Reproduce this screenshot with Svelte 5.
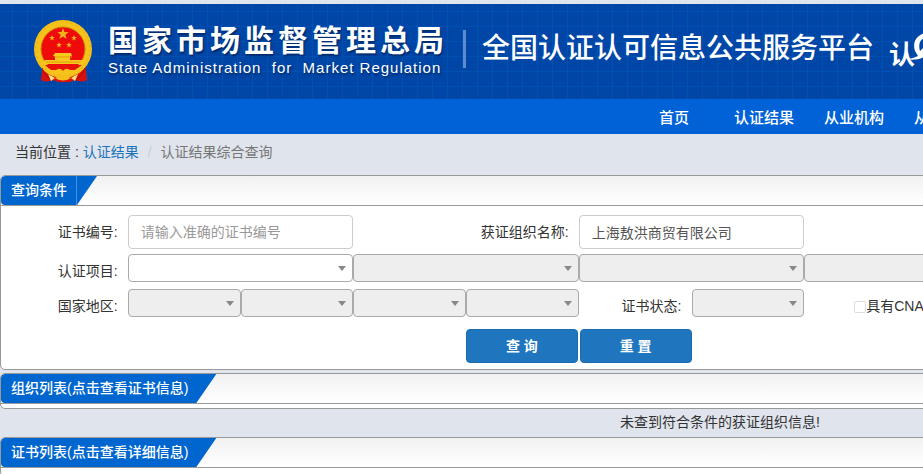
<script lang="ts">
  const nav: string[] = ["首页", "认证结果", "从业机构", "从业人员"];
  const stars = [
    { x: 29, y: 14, r: 6 },
    { x: 18, y: 18, r: 3 },
    { x: 40, y: 18, r: 3 },
    { x: 25, y: 25, r: 3 },
    { x: 35, y: 25, r: 3 },
  ];

  let certNo = "";
  let orgName = "上海敖洪商贸有限公司";
  let hasCnas = false;

  function star(x: number, y: number, r: number) {
    const pts = [];
    for (let i = 0; i < 10; i++) {
      const len = i % 2 ? r * 0.4 : r;
      const a = (Math.PI / 5) * i - Math.PI / 2;
      pts.push(`${x + len * Math.cos(a)},${y + len * Math.sin(a)}`);
    }
    return pts.join(" ");
  }

  function reset() {
    certNo = "";
    orgName = "";
    hasCnas = false;
  }
</script>

<div class="page">
  <header>
    <svg class="emblem" width="60" height="64" viewBox="0 0 60 64" aria-hidden="true">
      <path d="M9 43L7 60q4 3 12 0 5 3 11 2 6 1 11-2 8 3 12 0l-2-17z" fill="#d8110f" />
      <ellipse cx="29" cy="29" rx="29" ry="29" fill="#f5c21a" />
      <ellipse cx="29" cy="29" rx="27" ry="27" fill="none" stroke="#e9ae17" stroke-width="1" stroke-dasharray="2 3" />
      <ellipse cx="29" cy="29" rx="22" ry="22" fill="#f00b0b" stroke="#c8820f" />
      {#each stars as s}
        <polygon points={star(s.x, s.y, s.r)} fill="#f3b51c" />
      {/each}
      <path d="M21 33h16l1 3h-2v4h12l2 4H9l2-4h10v-4h-2z" fill="#f7c91c" />
      <path d="M20 37h18M12 42h35" stroke="#e39a12" fill="none" />
      <path d="M11 45h37l-5 5H16z" fill="#ea1109" />
      <path d="M10 45l10 7q5-6 9-1 4-5 9 1l10-7-5 8-9 2-5-2-5 2-9-2z" fill="#f6c21b" />
      <path d="M21 58q8-5 16 0-8 5-16 0z" fill="#f5be1b" />
      <path d="M21 58l-7-4 3 7zM37 58l7-4-3 7z" fill="#ffe27a" />
      <path d="M8 48q2 7 8 11M51 48q-2 7-8 11" stroke="#a90c0c" fill="none" />
    </svg>
    <div class="brand">
      <h1>国家市场监督管理总局</h1>
      <p>State Administration&nbsp; for&nbsp; Market Regulation</p>
    </div>
    <div class="platform">全国认证认可信息公共服务平台</div>
    <div class="mark">
      <span>认</span>
      <svg width="36" height="36" viewBox="0 0 36 36" aria-hidden="true">
        <path d="M14 1C4 2-1 10 2 19l3 5c-4 2-8 3-12 3 8 2 15 0 20-3 8 3 16 1 20-6-6 4-11 4-15 1 5-4 7-9 5-14-2-3-5-4-9-4zM7 19C5 12 7 7 12 6c3 2 1 8-5 13z" fill="#fff" />
      </svg>
    </div>
  </header>

  <nav>
    {#each nav as item}
      <a href="#/">{item}</a>
    {/each}
  </nav>

  <div class="breadcrumb">
    <span>当前位置 :&nbsp;</span><a href="#/">认证结果</a>
    <span class="slash">/</span>
    <span class="current">认证结果综合查询</span>
  </div>

  <section class="panel">
    <div class="head"><h2 class="split"><span>查询条件</span></h2></div>
    <form on:submit|preventDefault>
      <div class="row first">
        <label for="cert-no">证书编号:</label>
        <input id="cert-no" type="text" placeholder="请输入准确的证书编号" bind:value={certNo} />
        <label class="org" for="org-name">获证组织名称:</label>
        <input id="org-name" type="text" bind:value={orgName} />
      </div>
      <div class="row">
        <label for="project">认证项目:</label>
        <div class="select wide"><select id="project"></select></div>
        {#each [2, 3, 4] as level}
          <div class="select wide"><select disabled aria-label="认证项目 {level}"></select></div>
        {/each}
      </div>
      <div class="row area">
        <label for="country">国家地区:</label>
        <div class="select"><select id="country" disabled></select></div>
        {#each [2, 3, 4] as level}
          <div class="select"><select disabled aria-label="国家地区 {level}"></select></div>
        {/each}
        <label for="status">证书状态:</label>
        <div class="select"><select id="status" disabled></select></div>
        <label class="check"><input type="checkbox" bind:checked={hasCnas} />具有CNAS</label>
      </div>
      <div class="row">
        <div class="buttons">
          <button type="submit">查 询</button>
          <button type="button" on:click={reset}>重 置</button>
        </div>
      </div>
    </form>
  </section>

  <section class="panel">
    <div class="head"><h2>组织列表(点击查看证书信息)</h2></div>
    <div class="body"></div>
  </section>
  <p class="empty">未查到符合条件的获证组织信息!</p>

  <section class="panel">
    <div class="head"><h2>证书列表(点击查看详细信息)</h2></div>
    <div class="body last"></div>
  </section>
</div>

<style>
  :global(body) {
    margin: 0;
    background: #e0e4ec;
    overflow: hidden;
  }
  .page {
    box-sizing: border-box;
    min-width: 1440px;
    padding: 4px 0;
    color: #333;
    font: 14px/20px "Liberation Sans", "Noto Sans CJK SC", sans-serif;
  }
  h1,
  h2,
  p {
    margin: 0;
  }
  a {
    text-decoration: none;
  }

  header {
    display: flex;
    align-items: flex-start;
    height: 95px;
    padding-left: 34px;
    box-sizing: border-box;
    color: #fff;
    background:
      repeating-linear-gradient(90deg, transparent 0 12px, #0050b2 12px 13px, transparent 13px 15px),
      repeating-linear-gradient(transparent 0 7px, #0050b2 7px 8px, transparent 8px 15px),
      #0046a6;
  }
  .emblem {
    margin-top: 16px;
  }
  .brand {
    margin: 18px 0 0 14px;
    text-shadow: 1px 2px 2px #002a6b;
  }
  h1 {
    font-size: 30px;
    line-height: 38px;
    letter-spacing: 4px;
  }
  .brand p {
    font-size: 15px;
    line-height: 16px;
    letter-spacing: 1px;
  }
  .platform {
    margin: 26px 0 0 15px;
    padding-left: 16px;
    border-left: 3px solid #5c8cca;
    font-size: 28px;
    font-weight: 500;
    line-height: 38px;
  }
  .mark {
    display: flex;
    margin: 28px 0 0 15px;
    font-size: 26px;
    font-weight: bold;
    line-height: 46px;
  }
  .mark svg {
    margin-left: -2px;
    overflow: visible;
  }

  nav {
    display: flex;
    padding-left: 629px;
    background: #0062d6;
  }
  nav a {
    width: 90px;
    padding-top: 2px;
    color: #fff;
    font-size: 15px;
    font-weight: 500;
    line-height: 33px;
    text-align: center;
  }

  .breadcrumb {
    display: flex;
    padding: 8px 15px 13px;
  }
  .breadcrumb a {
    color: #1c74bc;
  }
  .slash {
    padding: 0 9px;
    color: #ccc;
  }
  .current {
    color: #777;
  }

  .panel {
    margin-bottom: 3px;
    border: 1px solid #999;
    border-radius: 5px;
    background: #fff;
    overflow: hidden;
  }
  .head {
    display: flex;
    border-bottom: 1px solid #999;
    background: linear-gradient(#f1f1f1, #fff);
  }
  h2 {
    padding: 0 28px 0 10px;
    border-radius: 4px 0 0 4px;
    color: #fff;
    background: #0066cf;
    clip-path: polygon(0 0, 100% 0, calc(100% - 20px) 100%, 0 100%);
    font-size: 14px;
    font-weight: 500;
    line-height: 29px;
  }
  .split {
    padding-right: 20px;
  }
  .split span {
    display: block;
    padding-right: 9px;
    border-right: 1px solid #4a93e0;
  }
  .body {
    height: 4px;
  }
  .last {
    height: 8px;
  }
  .empty {
    margin-top: -3px;
    padding: 3px 0 5px;
    text-align: center;
  }

  form {
    padding: 9px 71px 6px 14px;
  }
  .row {
    display: grid;
    grid-template-columns: repeat(12, 1fr);
    margin-bottom: 7px;
  }
  .row label {
    padding: 7px 10px 0 0;
    text-align: right;
  }
  .first {
    margin-bottom: 5px;
  }
  .row .org {
    grid-column: 4 / span 2;
  }
  .area {
    margin-bottom: 12px;
  }
  .row:last-child {
    margin-bottom: 0;
  }
  input[type="text"] {
    grid-column-end: span 2;
    box-sizing: border-box;
    min-width: 0;
    height: 34px;
    padding: 6px 12px;
    border: 1px solid #ccc;
    border-radius: 4px;
    color: #555;
    background: #fff;
    font: inherit;
  }
  input::placeholder {
    color: #999;
    opacity: 1;
  }
  .select {
    position: relative;
  }
  .wide {
    grid-column-end: span 2;
  }
  .select::after {
    content: "";
    position: absolute;
    top: 12px;
    right: 7px;
    border: 4px solid transparent;
    border-top: 5px solid #888;
    border-bottom: 0;
    pointer-events: none;
  }
  select {
    appearance: none;
    display: block;
    box-sizing: border-box;
    width: 100%;
    height: 28px;
    padding: 0 20px 0 8px;
    border: 1px solid #aaa;
    border-radius: 4px;
    background: #fff;
    font: inherit;
  }
  select:disabled {
    background: #eee;
    opacity: 1;
  }
  .row .check {
    grid-column-end: span 2;
    display: flex;
    padding-left: 50px;
  }
  input[type="checkbox"] {
    appearance: none;
    box-sizing: border-box;
    width: 12px;
    height: 12px;
    margin: 5px 0 0;
    border: 1px solid #ddd;
    border-radius: 2px;
    background: #fff;
  }
  input[type="checkbox"]:checked {
    background: #1c74bc;
  }
  .buttons {
    grid-column: 5 / span 2;
    display: flex;
    gap: 2px;
  }
  button {
    flex: 1;
    height: 34px;
    padding: 0;
    border: 1px solid #1a6bae;
    border-radius: 4px;
    color: #fff;
    background: #1f76be;
    font: inherit;
    font-weight: bold;
  }
</style>
